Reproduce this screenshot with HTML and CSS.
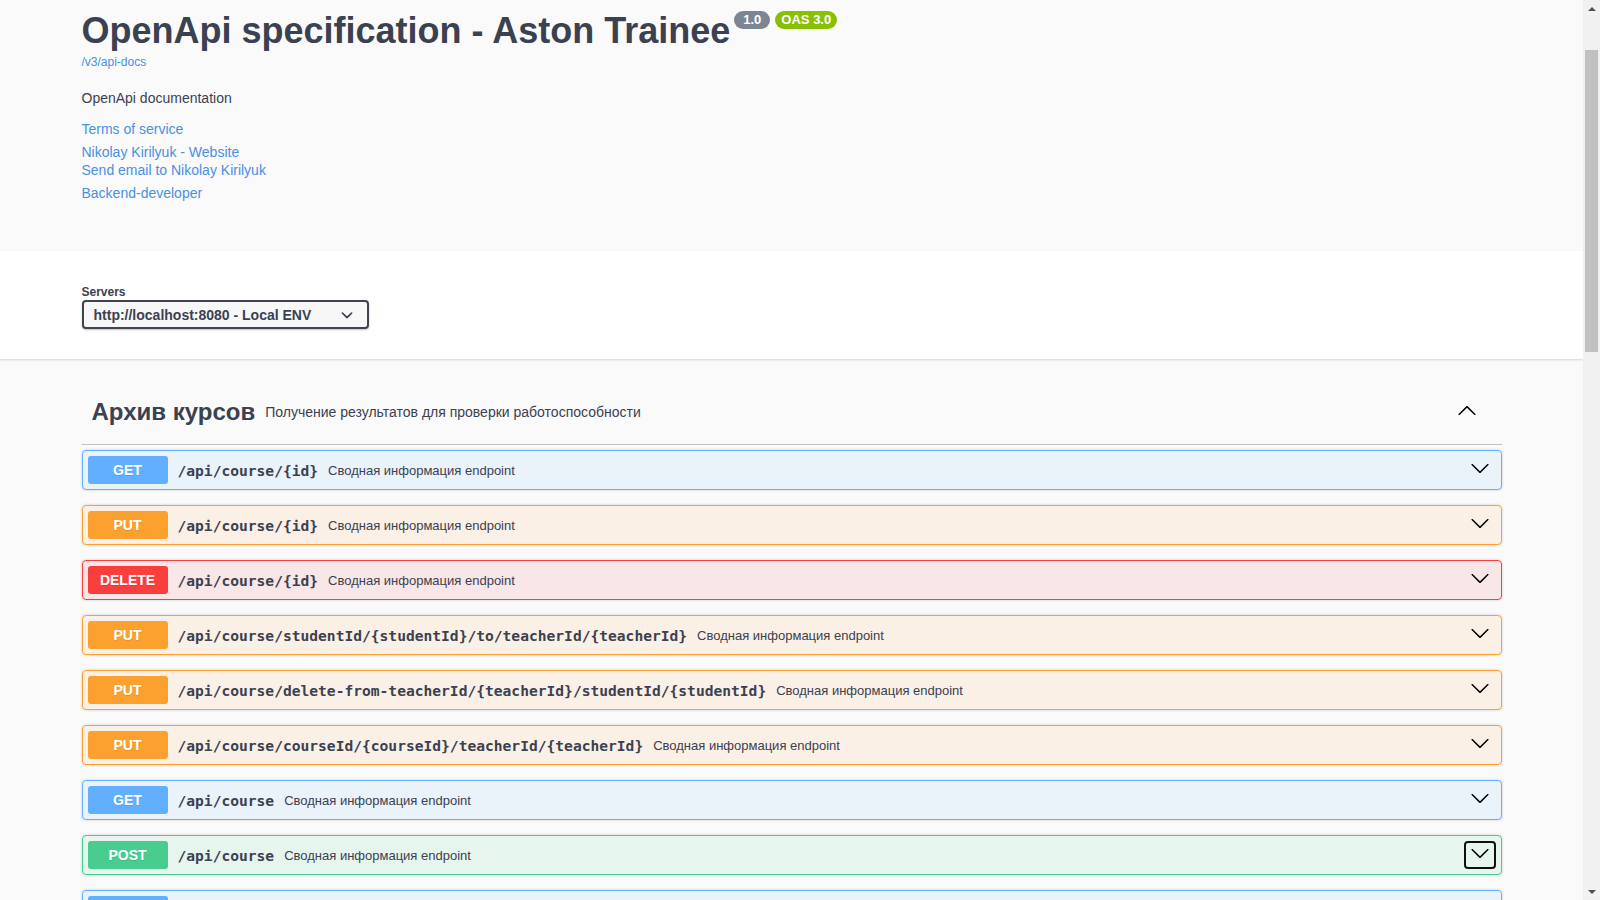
FILE: index.html
```html
<!DOCTYPE html>
<html lang="ru">
<head>
<meta charset="utf-8">
<title>Swagger UI</title>
<link rel="stylesheet" href="styles.css">
</head>
<body>
<div class="viewport">
  <div class="page">
    <section class="info-area">
      <div class="wrapper info">
        <div class="title-row">
          <h2 class="title">OpenApi specification - Aston Trainee</h2>
          <span class="badge version">1.0</span>
          <span class="badge oas">OAS 3.0</span>
        </div>
        <a class="base-url" href="#">/v3/api-docs</a>
        <p class="desc">OpenApi documentation</p>
        <a class="link tos" href="#">Terms of service</a>
        <div class="contact">
          <a class="link" href="#">Nikolay Kirilyuk - Website</a>
          <a class="link" href="#">Send email to Nikolay Kirilyuk</a>
        </div>
        <a class="link license" href="#">Backend-developer</a>
      </div>
    </section>

    <section class="scheme">
      <div class="wrapper">
        <span class="servers-label">Servers</span>
        <div class="select">
          <span>http://localhost:8080 - Local ENV</span>
          <svg width="24" height="24" viewBox="0 0 20 20"><path fill="#3b4151" d="M13.418 7.859a.695.695 0 01.978 0 .68.68 0 010 .969l-3.908 3.83a.697.697 0 01-.979 0l-3.908-3.83a.68.68 0 010-.969.695.695 0 01.978 0L10 11l3.418-3.141z"/></svg>
        </div>
      </div>
    </section>

    <section class="wrapper ops">
      <h3 class="tag">
        <span class="tag-name">Архив курсов</span>
        <small class="tag-desc">Получение результатов для проверки работоспособности</small>
        <span class="tag-arrow"><svg width="20" height="20" viewBox="0 0 20 20"><path fill="#000" d="M17.418 14.908c.272.268.709.268.979 0s.271-.701 0-.969l-7.908-7.83c-.27-.268-.707-.268-.979 0l-7.908 7.83c-.27.268-.27.701 0 .969.271.268.709.268.979 0L10 7.767l7.418 7.141z"/></svg></span>
      </h3>

      <div class="opblock get"><div class="summary"><span class="method">GET</span><span class="path">/api/course/{id}</span><span class="opdesc">Сводная информация endpoint</span><span class="arrow-btn"><svg width="20" height="20" viewBox="0 0 20 20"><path d="M17.418 6.109c.272-.268.709-.268.979 0s.271.701 0 .969l-7.908 7.83c-.27.268-.707.268-.979 0l-7.908-7.83c-.27-.268-.27-.701 0-.969.271-.268.709-.268.979 0L10 13.25l7.418-7.141z"/></svg></span></div></div>

      <div class="opblock put"><div class="summary"><span class="method">PUT</span><span class="path">/api/course/{id}</span><span class="opdesc">Сводная информация endpoint</span><span class="arrow-btn"><svg width="20" height="20" viewBox="0 0 20 20"><path d="M17.418 6.109c.272-.268.709-.268.979 0s.271.701 0 .969l-7.908 7.83c-.27.268-.707.268-.979 0l-7.908-7.83c-.27-.268-.27-.701 0-.969.271-.268.709-.268.979 0L10 13.25l7.418-7.141z"/></svg></span></div></div>

      <div class="opblock delete"><div class="summary"><span class="method">DELETE</span><span class="path">/api/course/{id}</span><span class="opdesc">Сводная информация endpoint</span><span class="arrow-btn"><svg width="20" height="20" viewBox="0 0 20 20"><path d="M17.418 6.109c.272-.268.709-.268.979 0s.271.701 0 .969l-7.908 7.83c-.27.268-.707.268-.979 0l-7.908-7.83c-.27-.268-.27-.701 0-.969.271-.268.709-.268.979 0L10 13.25l7.418-7.141z"/></svg></span></div></div>

      <div class="opblock put"><div class="summary"><span class="method">PUT</span><span class="path">/api/course/studentId/{studentId}/to/teacherId/{teacherId}</span><span class="opdesc">Сводная информация endpoint</span><span class="arrow-btn"><svg width="20" height="20" viewBox="0 0 20 20"><path d="M17.418 6.109c.272-.268.709-.268.979 0s.271.701 0 .969l-7.908 7.83c-.27.268-.707.268-.979 0l-7.908-7.83c-.27-.268-.27-.701 0-.969.271-.268.709-.268.979 0L10 13.25l7.418-7.141z"/></svg></span></div></div>

      <div class="opblock put"><div class="summary"><span class="method">PUT</span><span class="path">/api/course/delete-from-teacherId/{teacherId}/studentId/{studentId}</span><span class="opdesc">Сводная информация endpoint</span><span class="arrow-btn"><svg width="20" height="20" viewBox="0 0 20 20"><path d="M17.418 6.109c.272-.268.709-.268.979 0s.271.701 0 .969l-7.908 7.83c-.27.268-.707.268-.979 0l-7.908-7.83c-.27-.268-.27-.701 0-.969.271-.268.709-.268.979 0L10 13.25l7.418-7.141z"/></svg></span></div></div>

      <div class="opblock put"><div class="summary"><span class="method">PUT</span><span class="path">/api/course/courseId/{courseId}/teacherId/{teacherId}</span><span class="opdesc">Сводная информация endpoint</span><span class="arrow-btn"><svg width="20" height="20" viewBox="0 0 20 20"><path d="M17.418 6.109c.272-.268.709-.268.979 0s.271.701 0 .969l-7.908 7.83c-.27.268-.707.268-.979 0l-7.908-7.83c-.27-.268-.27-.701 0-.969.271-.268.709-.268.979 0L10 13.25l7.418-7.141z"/></svg></span></div></div>

      <div class="opblock get"><div class="summary"><span class="method">GET</span><span class="path">/api/course</span><span class="opdesc">Сводная информация endpoint</span><span class="arrow-btn"><svg width="20" height="20" viewBox="0 0 20 20"><path d="M17.418 6.109c.272-.268.709-.268.979 0s.271.701 0 .969l-7.908 7.83c-.27.268-.707.268-.979 0l-7.908-7.83c-.27-.268-.27-.701 0-.969.271-.268.709-.268.979 0L10 13.25l7.418-7.141z"/></svg></span></div></div>

      <div class="opblock post"><div class="summary"><span class="method">POST</span><span class="path">/api/course</span><span class="opdesc">Сводная информация endpoint</span><span class="arrow-btn focused"><svg width="20" height="20" viewBox="0 0 20 20"><path d="M17.418 6.109c.272-.268.709-.268.979 0s.271.701 0 .969l-7.908 7.83c-.27.268-.707.268-.979 0l-7.908-7.83c-.27-.268-.27-.701 0-.969.271-.268.709-.268.979 0L10 13.25l7.418-7.141z"/></svg></span></div></div>

      <div class="opblock get"><div class="summary"><span class="method">GET</span><span class="path">/api/course/all</span><span class="opdesc">Сводная информация endpoint</span><span class="arrow-btn"><svg width="20" height="20" viewBox="0 0 20 20"><path d="M17.418 6.109c.272-.268.709-.268.979 0s.271.701 0 .969l-7.908 7.83c-.27.268-.707.268-.979 0l-7.908-7.83c-.27-.268-.27-.701 0-.969.271-.268.709-.268.979 0L10 13.25l7.418-7.141z"/></svg></span></div></div>
    </section>
  </div>

  <div class="scrollbar">
    <div class="sb-btn"><svg width="8" height="4" viewBox="0 0 8 4"><polygon points="0,4 4,0 8,4" fill="#505050"/></svg></div>
    <div class="sb-track"><div class="sb-thumb"></div></div>
    <div class="sb-btn"><svg width="8" height="4" viewBox="0 0 8 4"><polygon points="0,0 8,0 4,4" fill="#505050"/></svg></div>
  </div>
</div>
</body>
</html>
```

FILE: styles.css
```css
html, body {
  margin: 0;
  padding: 0;
}

body {
  background: #fafafa;
  font-family: "Liberation Sans", Arial, sans-serif;
  color: #3b4151;
}

.viewport {
  display: flex;
  height: 900px;
  overflow: hidden;
}

.page {
  flex: 1;
  min-width: 0;
  overflow: hidden;
}

.wrapper {
  box-sizing: border-box;
  max-width: 1460px;
  margin: 0 auto;
  padding: 0 20px;
}

/* ---------- info ---------- */
.info {
  padding-top: 10px;
  padding-bottom: 50px;
}

.title-row {
  display: flex;
  align-items: flex-start;
}

.title {
  margin: 0;
  font-size: 36px;
  line-height: 41px;
  font-weight: 700;
  color: #3b4151;
}

.badge {
  margin-top: 1px;
  font-size: 13px;
  line-height: 14px;
  font-weight: 700;
  color: #fff;
  border-radius: 57px;
  padding: 2px 6px;
}

.badge.version {
  margin-left: 4px;
  padding: 2px 9px;
  background: #7d8492;
}

.badge.oas {
  margin-left: 5px;
  background: #89bf04;
}

.base-url {
  display: block;
  margin-top: 4px;
  font-size: 12px;
  line-height: 14px;
  color: #4990e2;
  text-decoration: none;
  width: max-content;
}

.desc {
  margin: 21px 0 0;
  font-size: 14px;
  line-height: 16px;
}

.link {
  display: block;
  width: max-content;
  font-size: 14px;
  line-height: 16px;
  color: #4990e2;
  text-decoration: none;
}

.tos {
  margin-top: 15px;
}

.contact {
  margin-top: 6px;
}

.contact .link {
  line-height: 18px;
}

.license {
  margin-top: 6px;
}

/* ---------- servers ---------- */
.scheme {
  background: #fff;
  box-shadow: 0 1px 2px 0 rgba(0, 0, 0, 0.15);
  padding: 34px 0 30px;
  margin-bottom: 19px;
}

.servers-label {
  display: block;
  font-size: 12px;
  line-height: 14px;
  font-weight: 700;
  margin-bottom: 1px;
}

.select {
  box-sizing: border-box;
  width: 287px;
  height: 29px;
  display: flex;
  align-items: center;
  justify-content: space-between;
  padding: 5px 8px 4px 10px;
  border: 2px solid #41444e;
  border-radius: 4px;
  background: #f7f7f7;
  box-shadow: 0 1px 2px 0 rgba(0, 0, 0, 0.25);
  font-size: 14px;
  line-height: 16px;
  font-weight: 700;
  color: #3b4151;
}

/* ---------- operations ---------- */
.tag {
  display: flex;
  align-items: center;
  height: 66px;
  margin: 0 0 5px;
  padding: 0 20px 0 10px;
  border-bottom: 1px solid rgba(59, 65, 81, 0.3);
  font-size: 24px;
  font-weight: 700;
  color: #3b4151;
}

.tag-name {
  padding-top: 1px;
}

.tag-desc {
  flex: 1;
  padding: 1px 10px 0;
  font-size: 14px;
  font-weight: 400;
}

.tag-arrow {
  display: flex;
  margin-right: 5px;
  margin-bottom: 2px;
}

.opblock {
  margin: 0 0 15px;
  border: 1px solid;
  border-radius: 4px;
  box-shadow: 0 0 3px rgba(0, 0, 0, 0.19);
}

.summary {
  display: flex;
  align-items: center;
  padding: 5px;
}

.method {
  min-width: 80px;
  padding: 6px 0;
  border-radius: 3px;
  font-size: 14px;
  line-height: 16px;
  font-weight: 700;
  text-align: center;
  color: #fff;
  text-shadow: 0 1px 0 rgba(0, 0, 0, 0.1);
}

.path {
  padding: 0 10px;
  font-family: "DejaVu Sans Mono", "Liberation Mono", monospace;
  font-size: 14.6px;
  font-weight: 700;
  color: #3b4151;
  white-space: nowrap;
}

.opdesc {
  flex: 1;
  font-size: 13px;
  color: #3b4151;
}

.arrow-btn {
  align-self: stretch;
  width: 32px;
  display: flex;
  align-items: center;
  justify-content: center;
  border-radius: 4px;
}

.arrow-btn svg {
  margin-bottom: 4px;
}

.arrow-btn.focused {
  box-shadow: inset 0 0 0 2px #101010;
}

.get {
  border-color: #61affe;
  background: rgba(97, 175, 254, 0.1);
}
.get .method { background: #61affe; }

.put {
  border-color: #fca130;
  background: rgba(252, 161, 48, 0.1);
}
.put .method { background: #fca130; }

.delete {
  border-color: #f93e3e;
  background: rgba(249, 62, 62, 0.1);
}
.delete .method { background: #f93e3e; }

.post {
  border-color: #49cc90;
  background: rgba(73, 204, 144, 0.1);
}
.post .method { background: #49cc90; }

/* ---------- scrollbar ---------- */
.scrollbar {
  flex: none;
  width: 17px;
  height: 900px;
  background: #f1f1f1;
  display: flex;
  flex-direction: column;
}

.sb-btn {
  height: 17px;
  display: flex;
  align-items: center;
  justify-content: center;
}

.sb-track {
  flex: 1;
  padding: 33px 2px 0;
}

.sb-thumb {
  height: 302px;
  background: #c1c1c1;
}
```
